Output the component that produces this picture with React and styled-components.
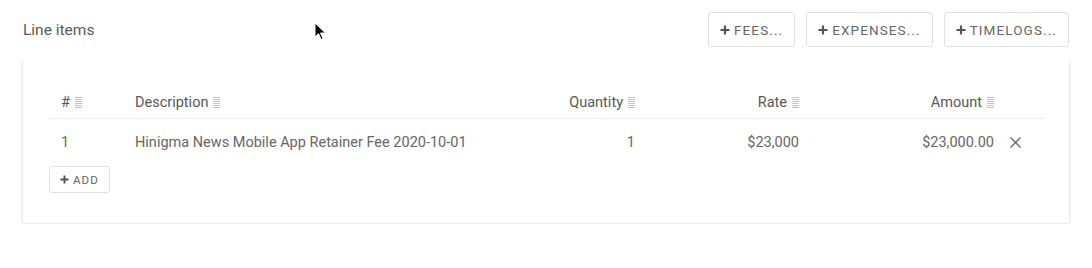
import React from 'react';
import styled, { createGlobalStyle } from 'styled-components';

const GlobalStyle = createGlobalStyle`
  body {
    margin: 0;
    background: #fff;
    font-family: Roboto, "Liberation Sans", sans-serif;
    color: #666;
  }
`;

const Page = styled.div`
  position: relative;
  padding: 12px 22px 0 22px;
`;

const Header = styled.div`
  display: flex;
  align-items: center;
  justify-content: space-between;
  height: 35px;
`;

const Title = styled.h2`
  margin: 0 0 0 1px;
  font-size: 15.5px;
  font-weight: 400;
  color: #5a5a5a;
`;

const Actions = styled.div`
  display: flex;
  gap: 11px;
  padding-right: 1px;
`;

const ActionButton = styled.button`
  display: flex;
  align-items: center;
  gap: 4px;
  height: ${(p) => (p.$small ? '27px' : '35px')};
  padding: 0 ${(p) => (p.$small ? '10px' : '11px')};
  margin-top: ${(p) => (p.$small ? '1px' : '0')};
  background: #fff;
  border: 1px solid #e0e0e0;
  border-radius: 3px;
  font-family: inherit;
  font-size: ${(p) => (p.$small ? '11.5px' : '13.5px')};
  letter-spacing: 1.1px;
  color: #666;
  text-transform: uppercase;
  cursor: pointer;
`;

const Card = styled.div`
  margin-top: 13px;
  padding: 26px 25px 30px 26px;
  border: 1px solid #ececec;
  border-top: none;
  border-radius: 0 0 3px 3px;
  box-shadow: 0 2px 3px rgba(0, 0, 0, 0.09);
`;

const Row = styled.div`
  display: grid;
  grid-template-columns: 74px 1fr 130px 164px 195px 38px;
  align-items: center;
  height: ${(p) => (p.$head ? '32px' : '46px')};
  ${(p) => p.$head && 'border-bottom: 1px solid #ececec;'}
  font-size: 14.5px;
  color: ${(p) => (p.$head ? '#585858' : '#666')};
`;

const Cell = styled.div`
  display: flex;
  align-items: center;
  justify-content: ${(p) => (p.$right ? 'flex-end' : 'flex-start')};
  gap: 5px;
  padding: 0 12px;
  white-space: nowrap;
`;

const RemoveCell = styled.div`
  display: flex;
  align-items: center;
  padding-left: 4px;
  color: #666;
`;

const Cursor = styled.svg`
  position: absolute;
  left: 314px;
  top: 22px;
`;

const SortIcon = () => (
  <svg width="7" height="11" viewBox="0 0 7 11">
    {[0.5, 2.5, 4.5, 6.5, 8.5, 10.5].map((y) => (
      <line key={y} x1="0" x2="7" y1={y} y2={y} stroke="#c4c4c4" strokeWidth="1" />
    ))}
  </svg>
);

const PlusIcon = ({ size = 10 }) => (
  <svg width={size} height={size} viewBox="0 0 10 10">
    <path d="M5 0.5v9M0.5 5h9" stroke="#555" strokeWidth="2.2" />
  </svg>
);

const CloseIcon = () => (
  <svg width="11" height="11" viewBox="0 0 11 11">
    <path d="M0.5 0.5l10 10M10.5 0.5l-10 10" stroke="#666" strokeWidth="1.3" />
  </svg>
);

const columns = [
  { label: '#' },
  { label: 'Description' },
  { label: 'Quantity', right: true },
  { label: 'Rate', right: true },
  { label: 'Amount', right: true },
];

const items = [
  {
    no: 1,
    description: 'Hinigma News Mobile App Retainer Fee 2020-10-01',
    quantity: '1',
    rate: '$23,000',
    amount: '$23,000.00',
  },
];

export default function App() {
  return (
    <Page>
      <GlobalStyle />
      <Header>
        <Title>Line items</Title>
        <Actions>
          {['Fees...', 'Expenses...', 'Timelogs...'].map((t) => (
            <ActionButton key={t}>
              <PlusIcon />
              {t}
            </ActionButton>
          ))}
        </Actions>
      </Header>

      <Card>
        <Row $head>
          {columns.map((c) => (
            <Cell key={c.label} $right={c.right}>
              {c.label}
              <SortIcon />
            </Cell>
          ))}
          <div />
        </Row>
        {items.map((it) => (
          <Row key={it.no}>
            <Cell>{it.no}</Cell>
            <Cell>{it.description}</Cell>
            <Cell $right>{it.quantity}</Cell>
            <Cell $right>{it.rate}</Cell>
            <Cell $right>{it.amount}</Cell>
            <RemoveCell>
              <CloseIcon />
            </RemoveCell>
          </Row>
        ))}
        <ActionButton $small>
          <PlusIcon size={9} />
          Add
        </ActionButton>
      </Card>

      <Cursor width="14" height="20" viewBox="0 0 14 20">
        <path d="M1 1v14l3.5-3.3 2.6 5.8 2-0.9-2.6-5.6h5z" fill="#000" stroke="#fff" strokeWidth="1" />
      </Cursor>
    </Page>
  );
}
